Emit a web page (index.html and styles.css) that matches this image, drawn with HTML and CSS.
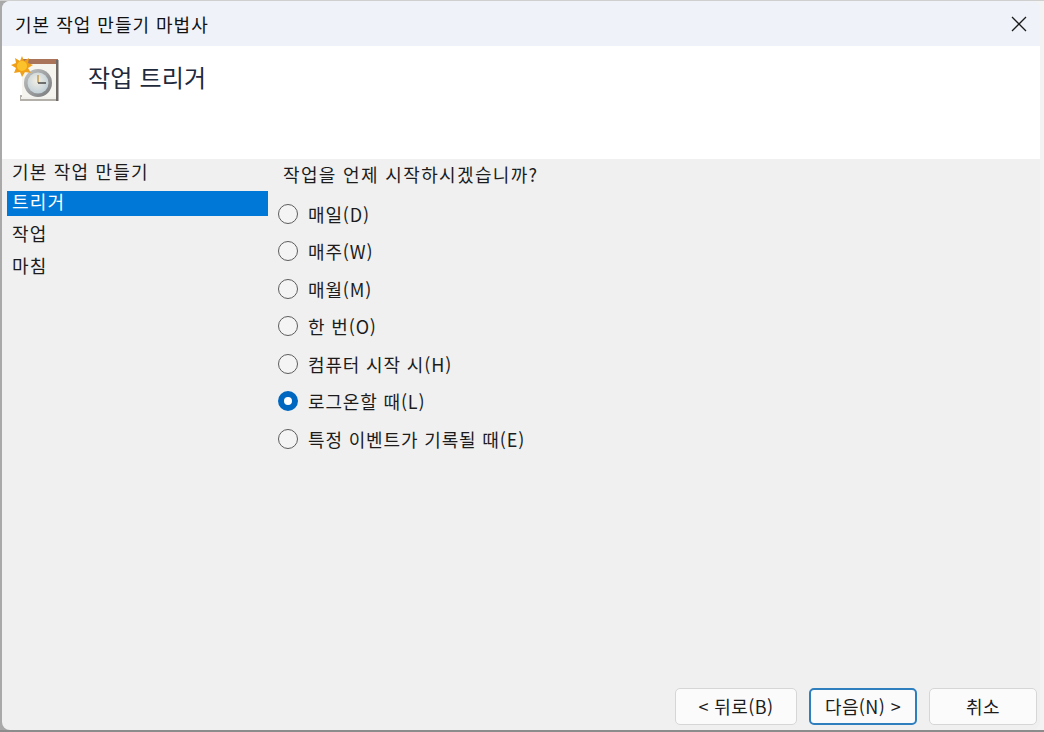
FILE: index.html
```html
<!DOCTYPE html>
<html lang="ko">
<head>
<meta charset="utf-8">
<title>기본 작업 만들기 마법사</title>
<link rel="stylesheet" href="styles.css">
</head>
<body>
<div class="window">
  <header class="titlebar">
    <span class="title">기본 작업 만들기 마법사</span>
    <svg class="close" width="18" height="18" viewBox="0 0 18 18"><path d="M2 2 L16 16 M16 2 L2 16" stroke="#1a1a1a" stroke-width="1.3" fill="none"/></svg>
  </header>
  <section class="banner">
    <svg class="wizard-icon" width="50" height="50" viewBox="0 0 50 50">
      <defs>
        <radialGradient id="face" cx="0.45" cy="0.4" r="0.7"><stop offset="0" stop-color="#f3efe4"/><stop offset="1" stop-color="#b9cbd6"/></radialGradient>
        <linearGradient id="ring" x1="0" y1="0" x2="1" y2="1"><stop offset="0" stop-color="#c4c6c6"/><stop offset="1" stop-color="#77787a"/></linearGradient>
      </defs>
      <path d="M10 40 L10 46 H48 V42 Z" fill="#b3afa9"/>
      <rect x="11" y="42" width="36" height="2" fill="#f2f0ec"/>
      <rect x="12" y="5" width="36" height="37" fill="#f6f4ef"/>
      <rect x="12" y="4" width="36" height="5" fill="#a9745a"/>
      <rect x="46" y="5" width="2.5" height="41" fill="#6f6a66"/>
      <circle cx="28" cy="28" r="14" fill="url(#ring)"/>
      <circle cx="28" cy="28" r="10.5" fill="url(#face)"/>
      <path d="M28 20 V28" stroke="#c8a45a" stroke-width="1.6" fill="none"/>
      <path d="M28 28 H36" stroke="#4a4a4a" stroke-width="1.4" fill="none"/>
      <path d="M12 1 L14 6 L19 3 L18 8 L23 10 L18 13 L21 18 L15 17 L12 22 L10 17 L4 18 L6 13 L1 10 L6 8 L5 3 L10 6 Z" fill="#f0a018"/>
      <circle cx="12" cy="11" r="5" fill="#fcc22c"/>
    </svg>
    <span class="banner-title">작업 트리거</span>
  </section>
  <main class="content">
    <nav class="steps">
      <div class="step step-first">기본 작업 만들기</div>
      <div class="step step-active">트리거</div>
      <div class="step">작업</div>
      <div class="step">마침</div>
    </nav>
    <form class="options">
      <p class="question">작업을 언제 시작하시겠습니까?</p>
      <label class="option"><span class="radio"></span>매일(D)</label>
      <label class="option"><span class="radio"></span>매주(W)</label>
      <label class="option"><span class="radio"></span>매월(M)</label>
      <label class="option"><span class="radio"></span>한 번(O)</label>
      <label class="option"><span class="radio"></span>컴퓨터 시작 시(H)</label>
      <label class="option"><span class="radio radio-on"></span>로그온할 때(L)</label>
      <label class="option"><span class="radio"></span>특정 이벤트가 기록될 때(E)</label>
    </form>
  </main>
  <footer class="actions">
    <button type="button" class="btn btn-back">&lt; 뒤로(B)</button>
    <button type="button" class="btn btn-next">다음(N) &gt;</button>
    <button type="button" class="btn btn-cancel">취소</button>
  </footer>
</div>
</body>
</html>
```
FILE: styles.css
```css
* { box-sizing: border-box; }
html, body { height: 100%; }
body {
  margin: 0;
  padding: 0 0 0 2px;
  background: linear-gradient(to right, #a9a9a9 50%, #f3f3f3 50%);
  border-top: 1px solid #cfcfcf;
  border-bottom: 2px solid #8c8c8c;
  font-family: "Noto Sans CJK KR", "Liberation Sans", sans-serif;
  color: #1c1c1c;
  font-size: 18px;
  overflow: hidden;
}
.window {
  width: 1038px;
  height: 729px;
  display: flex;
  flex-direction: column;
  border-radius: 8px;
  overflow: hidden;
  background: #f0f0f0;
}
.titlebar {
  height: 45px;
  flex: none;
  background: #eff3f9;
  display: flex;
  align-items: center;
  justify-content: space-between;
  padding: 0 12px 0 13px;
}
.title { font-size: 18px; letter-spacing: 1px; color: #111; }
.banner {
  height: 113px;
  flex: none;
  background: #fff;
  display: flex;
  align-items: flex-start;
  padding: 9px 0 0 8px;
}
.wizard-icon { flex: none; }
.banner-title {
  font-size: 24px;
  margin: 6px 0 0 28px;
  line-height: 32px;
  letter-spacing: 0.2px;
  color: #1f2a3c;
}
.content { flex: 1; display: flex; min-height: 0; }
.steps { width: 266px; flex: none; padding: 0 0 0 5px; }
.step {
  height: 25px;
  line-height: 21px;
  padding-left: 5px;
  margin-bottom: 7px;
  font-size: 18px;
  letter-spacing: 1.2px;
}
.step-first { line-height: 24px; }
.step-active { background: #0078d7; color: #fff; }
.options { padding: 3px 0 0 10px; display: flex; flex-direction: column; }
.question { margin: 0 0 9px 5px; font-size: 18px; line-height: 24px; letter-spacing: 1.35px; }
.option {
  height: 37.5px;
  display: flex;
  align-items: center;
  gap: 10px;
  font-size: 18px;
  letter-spacing: 0.85px;
}
.radio {
  width: 20px;
  height: 20px;
  border-radius: 50%;
  border: 1.5px solid #5c5c5c;
  background: #f4f4f4;
  flex: none;
}
.radio-on { border: 6px solid #0067c0; background: #fff; }
.actions {
  flex: none;
  display: flex;
  justify-content: flex-end;
  gap: 12px;
  padding: 0 3px 0 0;
  height: 42px;
  align-items: flex-start;
}
.btn {
  height: 37px;
  border: 1px solid #d6d6d6;
  border-radius: 5px;
  background: #fbfbfb;
  font: inherit;
  letter-spacing: 0.4px;
  color: #1c1c1c;
  padding: 0 0 2px;
}
.btn-back { width: 122px; }
.btn-next { width: 108px; border: 2px solid #2f7fbf; }
.btn-cancel { width: 108px; }
```
